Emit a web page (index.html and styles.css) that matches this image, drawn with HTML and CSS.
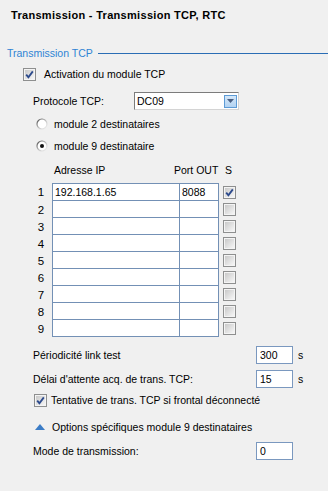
FILE: index.html
```html
<!DOCTYPE html>
<html>
<head>
  <meta charset="UTF-8">
  <title>Transmission TCP, RTC</title>
  <link rel="stylesheet" href="styles.css">
</head>
<body>
  <div class="page">
    <h1 class="title">Transmission - Transmission TCP, RTC</h1>

    <div class="group-head">
      <span>Transmission TCP</span>
      <i class="rule"></i>
    </div>

    <label class="check-row activation">
      <span class="cb"><svg class="tick" width="9" height="9" viewBox="0 0 9 9"><path d="M1.2 4.6 L3.4 7.2 L7.8 1.4" stroke="#2c4a8c" stroke-width="1.8" fill="none"/></svg></span>
      Activation du module TCP
    </label>

    <div class="field-row protocol">
      <span class="lbl">Protocole TCP:</span>
      <div class="combo">
        <span class="combo-text">DC09</span>
        <span class="combo-btn"><svg width="7" height="4" viewBox="0 0 7 4"><path d="M0 0 H7 L3.5 4 Z" fill="#4a5f82"/></svg></span>
      </div>
    </div>

    <div class="radio-row first">
      <svg class="radio" width="12" height="12" viewBox="0 0 12 12">
        <defs><linearGradient id="r1" x1="0" y1="0" x2="1" y2="1"><stop offset="0" stop-color="#4a4a4a"/><stop offset="0.55" stop-color="#c8c8c8"/><stop offset="1" stop-color="#f4f4f4"/></linearGradient></defs>
        <circle cx="6" cy="6" r="5" fill="#fff" stroke="url(#r1)" stroke-width="1.2"/>
      </svg>
      <span>module 2 destinataires</span>
    </div>
    <div class="radio-row">
      <svg class="radio" width="12" height="12" viewBox="0 0 12 12">
        <defs><linearGradient id="r2" x1="0" y1="0" x2="1" y2="1"><stop offset="0" stop-color="#4a4a4a"/><stop offset="0.55" stop-color="#c8c8c8"/><stop offset="1" stop-color="#f4f4f4"/></linearGradient></defs>
        <circle cx="6" cy="6" r="5" fill="#fff" stroke="url(#r2)" stroke-width="1.2"/>
        <circle cx="6" cy="6" r="2" fill="#111"/>
      </svg>
      <span>module 9 destinataire</span>
    </div>

    <div class="ip-head">
      <span class="col-ip">Adresse IP</span>
      <span class="col-port">Port OUT</span>
      <span class="col-s">S</span>
    </div>

    <div class="ip-table">
      <div class="ip-row">
        <span class="num">1</span>
        <span class="cell ip">192.168.1.65</span>
        <span class="cell port">8088</span>
        <span class="cb"><svg class="tick" width="9" height="9" viewBox="0 0 9 9"><path d="M1.2 4.6 L3.4 7.2 L7.8 1.4" stroke="#2c4a8c" stroke-width="1.8" fill="none"/></svg></span>
      </div>
      <div class="ip-row"><span class="num">2</span><span class="cell ip"></span><span class="cell port"></span><span class="cb"></span></div>
      <div class="ip-row"><span class="num">3</span><span class="cell ip"></span><span class="cell port"></span><span class="cb"></span></div>
      <div class="ip-row"><span class="num">4</span><span class="cell ip"></span><span class="cell port"></span><span class="cb"></span></div>
      <div class="ip-row"><span class="num">5</span><span class="cell ip"></span><span class="cell port"></span><span class="cb"></span></div>
      <div class="ip-row"><span class="num">6</span><span class="cell ip"></span><span class="cell port"></span><span class="cb"></span></div>
      <div class="ip-row"><span class="num">7</span><span class="cell ip"></span><span class="cell port"></span><span class="cb"></span></div>
      <div class="ip-row"><span class="num">8</span><span class="cell ip"></span><span class="cell port"></span><span class="cb"></span></div>
      <div class="ip-row"><span class="num">9</span><span class="cell ip"></span><span class="cell port"></span><span class="cb"></span></div>
    </div>

    <div class="field-row link-test">
      <span class="lbl wide">Périodicité link test</span>
      <span class="box">300</span>
      <span class="unit">s</span>
    </div>
    <div class="field-row ack">
      <span class="lbl wide">Délai d'attente acq. de trans. TCP:</span>
      <span class="box">15</span>
      <span class="unit">s</span>
    </div>

    <label class="check-row retry">
      <span class="cb"><svg class="tick" width="9" height="9" viewBox="0 0 9 9"><path d="M1.2 4.6 L3.4 7.2 L7.8 1.4" stroke="#2c4a8c" stroke-width="1.8" fill="none"/></svg></span>
      Tentative de trans. TCP si frontal déconnecté
    </label>

    <div class="options-row">
      <svg width="10" height="6" viewBox="0 0 10 6"><path d="M0 6 L5 0 L10 6 Z" fill="#3b7cc6"/></svg>
      <span>Options spécifiques module 9 destinataires</span>
    </div>

    <div class="field-row mode">
      <span class="lbl wide">Mode de transmission:</span>
      <span class="box">0</span>
    </div>
  </div>
</body>
</html>
```

FILE: styles.css
```css
body {
  margin: 0;
  padding: 0;
  background: #f0f0f0;
  font-family: "Liberation Sans", Arial, sans-serif;
  font-size: 10.5px;
  color: #000;
}

.page {
  width: 328px;
  height: 491px;
  overflow: hidden;
}

.title {
  margin: 0;
  padding: 9px 0 0 11px;
  font-size: 11px;
  font-weight: bold;
  letter-spacing: 0.3px;
  line-height: 13px;
}

.group-head {
  display: flex;
  align-items: center;
  margin-top: 25px;
  padding-left: 7px;
  line-height: 13px;
  color: #2f84d4;
}

.rule {
  flex: 1;
  height: 1px;
  margin-left: 5px;
  background: #2a6db5;
}

.cb {
  display: flex;
  align-items: center;
  justify-content: center;
  box-sizing: border-box;
  width: 13px;
  height: 13px;
  border: 1px solid #8e8f8f;
  padding: 1px;
  background: linear-gradient(135deg, #c9c9c9, #f6f6f6) content-box, #f4f4f4;
  flex: none;
}

.check-row {
  display: flex;
  align-items: center;
  height: 13px;
  line-height: 13px;
}

.activation {
  margin-top: 8px;
  padding-left: 23px;
}

.activation .cb {
  margin-right: 8px;
}

.retry {
  margin-top: 6px;
  padding-left: 34px;
}

.retry .cb {
  margin-right: 4px;
}

.field-row {
  display: flex;
  align-items: center;
  height: 18px;
  padding-left: 33px;
}

.lbl {
  width: 101px;
}

.lbl.wide {
  width: 223px;
}

.protocol {
  margin-top: 11px;
}

.combo {
  display: flex;
  align-items: center;
  justify-content: space-between;
  box-sizing: border-box;
  width: 105px;
  height: 18px;
  padding: 0 1px 0 2px;
  background: #fff;
  border: 1px solid;
  border-color: #7c7c7c #d4d4d4 #d4d4d4 #7c7c7c;
}

.combo-btn {
  display: flex;
  align-items: center;
  justify-content: center;
  box-sizing: border-box;
  width: 13px;
  height: 13px;
  border: 1px solid #5d9bd6;
  background: linear-gradient(#d4e7f9, #b3d3f2);
}

.radio-row {
  display: flex;
  align-items: center;
  height: 13px;
  margin-top: 9px;
  padding-left: 36px;
}

.radio-row.first {
  margin-top: 7px;
}

.radio {
  margin-right: 6px;
}

.ip-head {
  display: flex;
  height: 13px;
  line-height: 13px;
  margin-top: 12px;
  padding-left: 54px;
}

.col-ip {
  width: 120px;
}

.col-port {
  width: 51px;
}

.ip-table {
  margin-top: 6px;
}

.ip-row {
  display: flex;
  align-items: center;
  height: 17px;
  padding-left: 34px;
}

.ip-row:first-child {
  height: 18px;
}

.num {
  width: 14px;
  margin-right: 4px;
  text-align: center;
  font-size: 11.5px;
}

.cell {
  box-sizing: border-box;
  height: 100%;
  line-height: 16px;
  background: #fff;
  border-left: 1px solid #7390b5;
  border-bottom: 1px solid #7390b5;
}

.ip-row:first-child .cell {
  border-top: 1px solid #7390b5;
}

.cell.ip {
  width: 127px;
  padding-left: 2px;
}

.cell.port {
  width: 40px;
  padding-left: 2px;
  border-right: 1px solid #7390b5;
}

.ip-row .cb {
  margin-left: 4px;
}

.link-test {
  margin-top: 9px;
}

.ack {
  margin-top: 6px;
}

.box {
  box-sizing: border-box;
  width: 37px;
  height: 18px;
  line-height: 16px;
  padding-left: 3px;
  background: #fff;
  border: 1px solid #7a98bf;
}

.unit {
  margin-left: 5px;
}

.options-row {
  display: flex;
  align-items: center;
  height: 13px;
  margin-top: 13px;
  padding-left: 35px;
}

.options-row svg {
  margin-right: 7px;
}

.mode {
  margin-top: 9px;
}
```
